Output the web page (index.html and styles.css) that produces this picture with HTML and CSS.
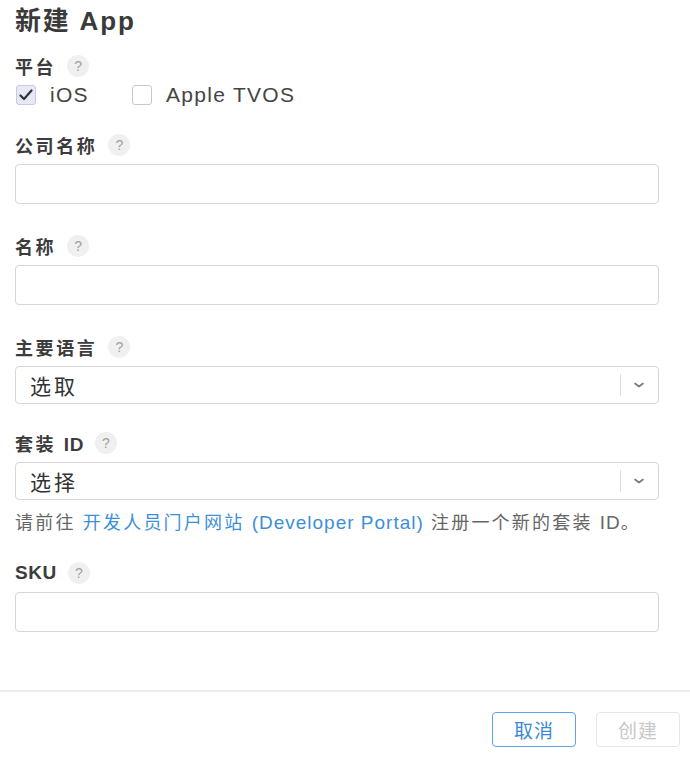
FILE: index.html
```html
<!DOCTYPE html>
<html lang="zh-CN">
<head>
    <meta charset="UTF-8">
    <meta name="viewport" content="width=device-width, initial-scale=1.0">
    <title>新建 App</title>
    <link rel="stylesheet" href="styles.css">
</head>
<body>
    <div class="dialog">
        <div class="form-body">
            <h1>新建 App</h1>

            <div class="label-row platform-label">
                <span class="label">平台</span>
                <span class="help">?</span>
            </div>
            <div class="platforms">
                <label class="check-item">
                    <span class="checkbox checked">
                        <svg width="14" height="12" viewBox="0 0 14 12"><path d="M1.5 6.5 L5 10 L12.5 1.5" fill="none" stroke="#333" stroke-width="2.2" stroke-linecap="round" stroke-linejoin="round"/></svg>
                    </span>
                    iOS
                </label>
                <label class="check-item">
                    <span class="checkbox"></span>
                    Apple TVOS
                </label>
            </div>

            <div class="form-group">
                <div class="label-row">
                    <span class="label">公司名称</span>
                    <span class="help">?</span>
                </div>
                <div class="text-input"></div>
            </div>

            <div class="form-group">
                <div class="label-row">
                    <span class="label">名称</span>
                    <span class="help">?</span>
                </div>
                <div class="text-input"></div>
            </div>

            <div class="form-group">
                <div class="label-row">
                    <span class="label">主要语言</span>
                    <span class="help">?</span>
                </div>
                <div class="select">
                    <span class="select-value">选取</span>
                    <span class="select-sep"></span>
                    <svg class="chevron" width="12" height="8" viewBox="0 0 12 8"><path d="M2 2.5 L6 5.5 L10 2.5" fill="none" stroke="#777" stroke-width="1.6" stroke-linecap="round" stroke-linejoin="round"/></svg>
                </div>
            </div>

            <div class="form-group tight">
                <div class="label-row">
                    <span class="label">套装 <span class="latin">ID</span></span>
                    <span class="help">?</span>
                </div>
                <div class="select">
                    <span class="select-value">选择</span>
                    <span class="select-sep"></span>
                    <svg class="chevron" width="12" height="8" viewBox="0 0 12 8"><path d="M2 2.5 L6 5.5 L10 2.5" fill="none" stroke="#777" stroke-width="1.6" stroke-linecap="round" stroke-linejoin="round"/></svg>
                </div>
                <p class="note">请前往 <a href="#">开发人员门户网站 <span class="latin">(Developer Portal)</span></a> 注册一个新的套装 <span class="latin">ID</span>。</p>
            </div>

            <div class="form-group tight">
                <div class="label-row">
                    <span class="label"><span class="latin">SKU</span></span>
                    <span class="help">?</span>
                </div>
                <div class="text-input"></div>
            </div>
        </div>

        <div class="footer">
            <button class="btn btn-cancel">取消</button>
            <button class="btn btn-create" disabled>创建</button>
        </div>
    </div>
</body>
</html>
```

FILE: styles.css
```css
body {
    font-family: "Liberation Sans", "Noto Sans CJK SC", sans-serif;
    margin: 0;
    padding: 0;
    background-color: #fff;
    color: #333;
}

.dialog {
    width: 690px;
}

.form-body {
    padding: 5px 31px 0 15px;
    height: 690px;
    box-sizing: border-box;
}

h1 {
    font-size: 26px;
    font-weight: 600;
    line-height: 32px;
    margin: 0 0 17px;
    letter-spacing: 1.8px;
    color: #3a3a3a;
}

.label-row {
    display: flex;
    align-items: center;
    height: 24px;
}

.label {
    font-size: 18px;
    font-weight: 600;
    letter-spacing: 2.6px;
    color: #3c3c3c;
}

.label .latin {
    font-size: 19px;
    letter-spacing: 0.6px;
}

.help {
    width: 22px;
    height: 22px;
    margin-left: 11px;
    border-radius: 50%;
    background-color: #f0f0f0;
    color: #a0a0a0;
    font-size: 14px;
    line-height: 22px;
    text-align: center;
}

.platforms {
    display: flex;
    align-items: center;
    height: 24px;
    margin-top: 5px;
}

.check-item {
    display: flex;
    align-items: center;
    font-size: 21px;
    letter-spacing: 1.3px;
    color: #444;
    margin-right: 42px;
}

.checkbox {
    width: 18px;
    height: 18px;
    border: 1px solid #c8c8c8;
    border-radius: 3px;
    margin: 0 14px 0 1px;
    display: flex;
    align-items: center;
    justify-content: center;
}

.checkbox.checked {
    background-color: #e6e9f5;
    border-color: #c5cbe0;
}

.form-group {
    margin-top: 26px;
}

.form-group + .form-group {
    margin-top: 30px;
}

.form-group.tight {
    margin-top: 27px;
}

.text-input {
    margin-top: 7px;
    height: 40px;
    border: 1px solid #d6d6d6;
    border-radius: 4px;
    box-sizing: border-box;
}

.select {
    margin-top: 7px;
    height: 38px;
    border: 1px solid #d6d6d6;
    border-radius: 4px;
    box-sizing: border-box;
    display: flex;
    align-items: center;
    padding: 0 13px 0 14px;
}

.select-value {
    flex: 1;
    font-size: 21px;
    letter-spacing: 3px;
    color: #333;
}

.select-sep {
    width: 1px;
    height: 22px;
    background-color: #ddd;
    margin-right: 12px;
}

.note {
    margin: 12px 0 0;
    font-size: 18px;
    line-height: 22px;
    color: #666;
    letter-spacing: 2.2px;
}

.note .latin {
    font-size: 19px;
    letter-spacing: 1px;
}

.note a {
    color: #3d8fd9;
    text-decoration: none;
}

.footer {
    border-top: 2px solid #ededed;
    display: flex;
    justify-content: flex-end;
    gap: 20px;
    padding: 20px 10px 0 0;
}

.btn {
    width: 84px;
    height: 35px;
    border-radius: 4px;
    background-color: #fff;
    font-family: "Noto Sans CJK SC", sans-serif;
    font-size: 19px;
    letter-spacing: 1px;
    cursor: pointer;
}

.btn-cancel {
    border: 1px solid #5ea3e8;
    color: #3b88d8;
}

.btn-create {
    border: 1px solid #e6e6e6;
    color: #c8c8c8;
    cursor: default;
}
```
